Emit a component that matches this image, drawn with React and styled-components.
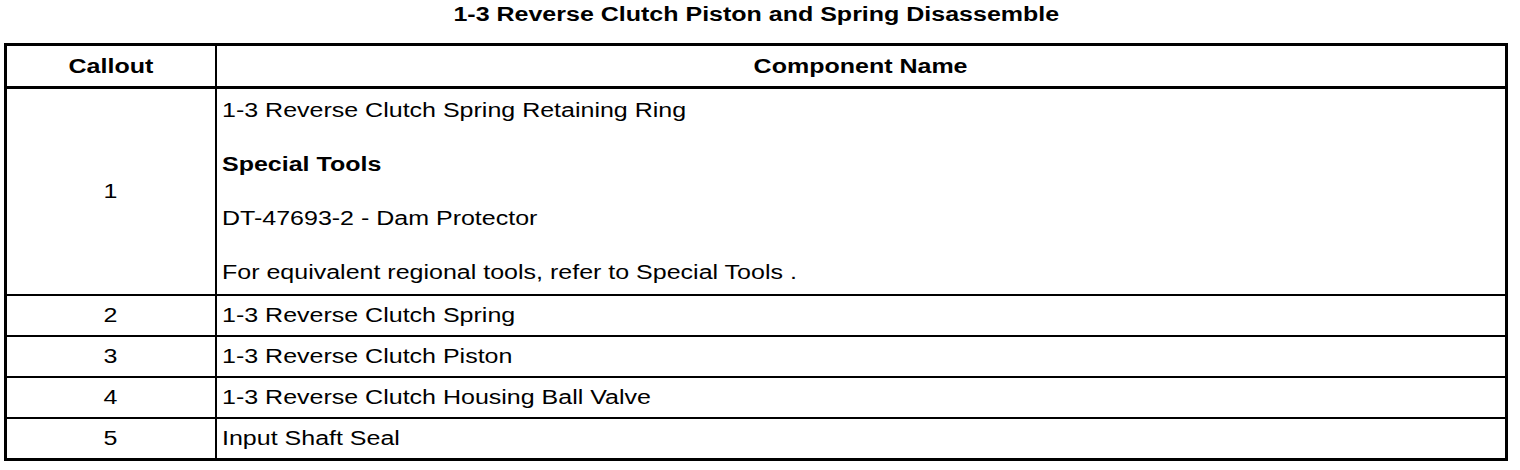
import React from "react";
import styled, { createGlobalStyle } from "styled-components";

const GlobalStyle = createGlobalStyle`
  html, body {
    margin: 0;
    padding: 0;
    background: #ffffff;
  }
  body {
    font-family: "Liberation Sans", Arial, Helvetica, sans-serif;
    color: #000000;
  }
`;

const Page = styled.div`
  width: 1504px;
  padding: 3px 12px 0 4px;
  display: flex;
  flex-direction: column;
`;

const Title = styled.h1`
  margin: 0 0 17px 0;
  font-size: 20px;
  line-height: 23px;
  font-weight: 700;
  text-align: center;
`;

const Text = styled.span`
  display: inline-block;
  white-space: nowrap;
  transform: scaleX(1.25);
  transform-origin: ${(p) => (p.$align === "left" ? "left center" : "center center")};
  font-weight: ${(p) => (p.$bold ? 700 : 400)};
`;

const Table = styled.div`
  border: 3px solid #000;
  display: flex;
  flex-direction: column;
`;

const Row = styled.div`
  display: grid;
  grid-template-columns: 210px 1fr;
  border-bottom: ${(p) => (p.$header ? "3px" : "2px")} solid #000;
  &:last-child {
    border-bottom: none;
  }
`;

const CalloutCell = styled.div`
  border-right: 2px solid #000;
  display: flex;
  align-items: center;
  justify-content: center;
  font-size: 20px;
  line-height: 23px;
  padding: ${(p) => (p.$header ? "9px 0 8px" : "8px 0")};
`;

const NameCell = styled.div`
  display: flex;
  flex-direction: column;
  justify-content: center;
  align-items: ${(p) => (p.$center ? "center" : "flex-start")};
  font-size: 20px;
  line-height: 23px;
  padding: ${(p) => (p.$tall ? "10px 5px" : p.$header ? "9px 5px 8px" : "8px 5px")};
  gap: 31px;
`;

const Para = styled.p`
  margin: 0;
`;

const rows = [
  { n: "2", name: "1-3 Reverse Clutch Spring" },
  { n: "3", name: "1-3 Reverse Clutch Piston" },
  { n: "4", name: "1-3 Reverse Clutch Housing Ball Valve" },
  { n: "5", name: "Input Shaft Seal" },
];

export default function App() {
  return (
    <>
      <GlobalStyle />
      <Page>
        <Title>
          <Text $bold>1-3 Reverse Clutch Piston and Spring Disassemble</Text>
        </Title>
        <Table>
          <Row $header>
            <CalloutCell $header>
              <Text $bold>Callout</Text>
            </CalloutCell>
            <NameCell $header $center>
              <Text $bold>Component Name</Text>
            </NameCell>
          </Row>
          <Row>
            <CalloutCell>
              <Text>1</Text>
            </CalloutCell>
            <NameCell $tall>
              <Para>
                <Text $align="left">1-3 Reverse Clutch Spring Retaining Ring</Text>
              </Para>
              <Para>
                <Text $align="left" $bold>Special Tools</Text>
              </Para>
              <Para>
                <Text $align="left">DT-47693-2 - Dam Protector</Text>
              </Para>
              <Para>
                <Text $align="left">For equivalent regional tools, refer to Special Tools .</Text>
              </Para>
            </NameCell>
          </Row>
          {rows.map((r) => (
            <Row key={r.n}>
              <CalloutCell>
                <Text>{r.n}</Text>
              </CalloutCell>
              <NameCell>
                <Text $align="left">{r.name}</Text>
              </NameCell>
            </Row>
          ))}
        </Table>
      </Page>
    </>
  );
}
